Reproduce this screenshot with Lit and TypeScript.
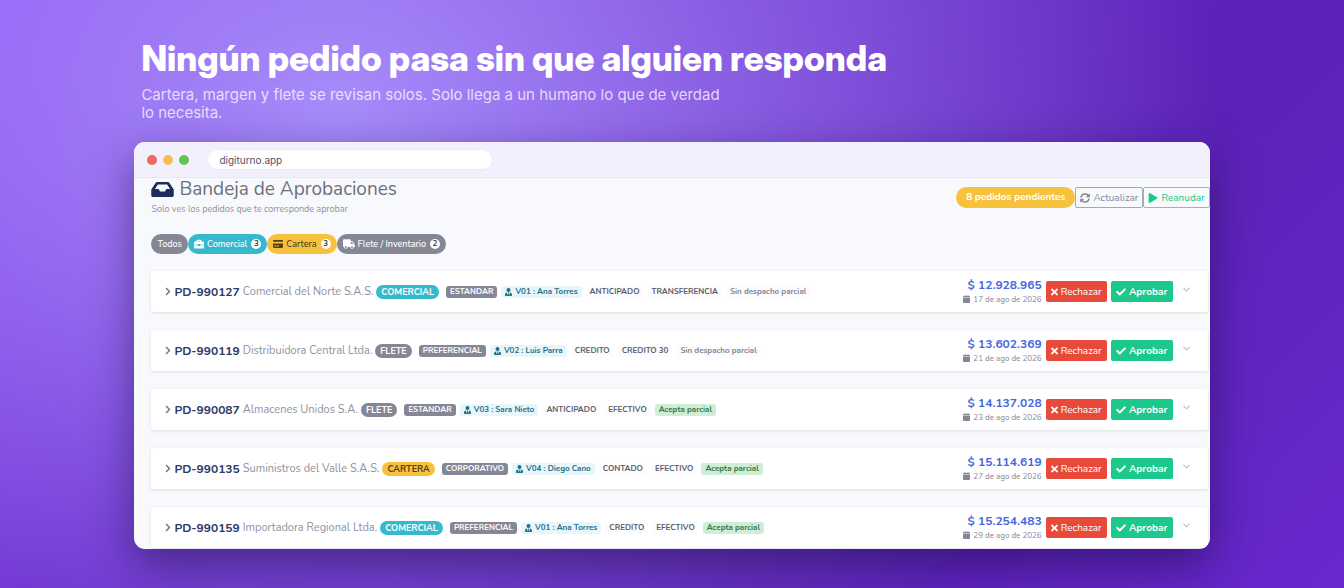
import { LitElement, html, css, svg, nothing } from "lit";
import { customElement, property, state } from "lit/decorators.js";
import { classMap } from "lit/directives/class-map.js";

type Area = "comercial" | "cartera" | "flete";

interface Order {
  id: string;
  client: string;
  area: Area;
  segment: string;
  seller: string;
  terms: string;
  method: string;
  partial: boolean;
  amount: string;
  date: string;
}

const ORDERS: Order[] = [
  { id: "PD-990127", client: "Comercial del Norte S.A.S.", area: "comercial", segment: "ESTANDAR", seller: "V01 : Ana Torres", terms: "ANTICIPADO", method: "TRANSFERENCIA", partial: false, amount: "$ 12.928.965", date: "17 de ago de 2026" },
  { id: "PD-990119", client: "Distribuidora Central Ltda.", area: "flete", segment: "PREFERENCIAL", seller: "V02 : Luis Parra", terms: "CREDITO", method: "CREDITO 30", partial: false, amount: "$ 13.602.369", date: "21 de ago de 2026" },
  { id: "PD-990087", client: "Almacenes Unidos S.A.", area: "flete", segment: "ESTANDAR", seller: "V03 : Sara Nieto", terms: "ANTICIPADO", method: "EFECTIVO", partial: true, amount: "$ 14.137.028", date: "23 de ago de 2026" },
  { id: "PD-990135", client: "Suministros del Valle S.A.S.", area: "cartera", segment: "CORPORATIVO", seller: "V04 : Diego Cano", terms: "CONTADO", method: "EFECTIVO", partial: true, amount: "$ 15.114.619", date: "27 de ago de 2026" },
  { id: "PD-990159", client: "Importadora Regional Ltda.", area: "comercial", segment: "PREFERENCIAL", seller: "V01 : Ana Torres", terms: "CREDITO", method: "EFECTIVO", partial: true, amount: "$ 15.254.483", date: "29 de ago de 2026" },
];

const TABS: { area: Area; label: string; icon: string; count: number }[] = [
  { area: "comercial", label: "Comercial", icon: "briefcase", count: 3 },
  { area: "cartera", label: "Cartera", icon: "card", count: 3 },
  { area: "flete", label: "Flete / Inventario", icon: "truck", count: 2 },
];

const ICONS: Record<string, { box: string; body: unknown }> = {
  inbox: {
    box: "0 32 576 384",
    body: svg`<path fill-rule="evenodd" d="M567.900 211.400 462.300 53.100A48 48 0 0 0 422.400 32H153.600a48 48 0 0 0-39.900 21.100L8.100 211.400A48 48 0 0 0 0 238v130a48 48 0 0 0 48 48h480a48 48 0 0 0 48-48V238a48 48 0 0 0-8.100-26.600ZM170.700 96h234.600L480 208h-96l-32 64H224l-32-64H96Z"/>`,
  },
  briefcase: {
    box: "0 0 512 512",
    body: svg`<path fill-rule="evenodd" d="M48 128h80V80a48 48 0 0 1 48-48h160a48 48 0 0 1 48 48v48h80a48 48 0 0 1 48 48v112H320v-16a16 16 0 0 0-16-16h-96a16 16 0 0 0-16 16v16H0V176a48 48 0 0 1 48-48Zm144 0h128V96H192Z"/><path d="M0 320h192v16a16 16 0 0 0 16 16h96a16 16 0 0 0 16-16v-16h192v112a48 48 0 0 1-48 48H48a48 48 0 0 1-48-48Z"/>`,
  },
  card: {
    box: "0 0 576 512",
    body: svg`<path d="M48 32h480a48 48 0 0 1 48 48v48H0V80a48 48 0 0 1 48-48Z"/><path fill-rule="evenodd" d="M0 224h576v208a48 48 0 0 1-48 48H48a48 48 0 0 1-48-48Zm64 124v40a12 12 0 0 0 12 12h72a12 12 0 0 0 12-12v-40a12 12 0 0 0-12-12H76a12 12 0 0 0-12 12Zm128 0v40a12 12 0 0 0 12 12h136a12 12 0 0 0 12-12v-40a12 12 0 0 0-12-12H204a12 12 0 0 0-12 12Z"/>`,
  },
  truck: {
    box: "0 0 640 512",
    body: svg`<path fill-rule="evenodd" d="M48 0h320a48 48 0 0 1 48 48v48h44a48 48 0 0 1 34 14l100 100a48 48 0 0 1 14 34v108h16a16 16 0 0 1 16 16v32a16 16 0 0 1-16 16h-48a96 96 0 0 1-192 0H256a96 96 0 0 1-192 0H48a48 48 0 0 1-48-48V48A48 48 0 0 1 48 0Zm368 144v112h144v-12L460 144ZM160 368a48 48 0 1 0 0 96 48 48 0 0 0 0-96Zm320 0a48 48 0 1 0 0 96 48 48 0 0 0 0-96Z"/>`,
  },
  sync: {
    box: "0 0 512 512",
    body: svg`<path d="M370.700 133.300A166 166 0 0 0 93 218c-2 6-6 9-11 9H24c-8 0-13-7-12-14A248 248 0 0 1 256 8c66 0 127 26 171 69l36-36c15-15 41-4 41 17v134a24 24 0 0 1-24 24H346c-21 0-32-26-17-41ZM32 296h134c21 0 32 26 17 41l-42 42a166 166 0 0 0 278-85c2-6 6-9 11-9h58c8 0 13 7 12 14A248 248 0 0 1 256 504c-66 0-127-26-171-69l-36 36c-15 15-41 4-41-17V320a24 24 0 0 1 24-24Z"/>`,
  },
  play: {
    box: "0 0 448 512",
    body: svg`<path d="M424.400 214.700 72.400 6.600C43.800-10.300 0 6.100 0 47.900V464c0 37.500 40.700 60.100 72.400 41.300l352-208c31.400-18.500 31.500-64.100 0-82.600Z"/>`,
  },
  user: {
    box: "0 0 448 512",
    body: svg`<path d="M224 256a128 128 0 1 0 0-256 128 128 0 0 0 0 256Zm96 33-48 191-32-136 32-56h-96l32 56-32 136-48-191C57 292 0 350 0 422v42a48 48 0 0 0 48 48h352a48 48 0 0 0 48-48v-42c0-72-57-130-128-133Z"/>`,
  },
  calendar: {
    box: "0 0 448 512",
    body: svg`<path d="M0 192h448v272a48 48 0 0 1-48 48H48a48 48 0 0 1-48-48Zm0-32v-48a48 48 0 0 1 48-48h48V12A12 12 0 0 1 108 0h40a12 12 0 0 1 12 12v52h128V12a12 12 0 0 1 12-12h40a12 12 0 0 1 12 12v52h48a48 48 0 0 1 48 48v48Z"/>`,
  },
  times: {
    box: "0 0 352 352",
    body: svg`<path d="m243 176 100-100c12-12 12-32 0-44L321 9c-12-12-32-12-44 0L176 109 76 9C64-3 44-3 32 9L9 32c-12 12-12 32 0 44l100 100L9 276c-12 12-12 32 0 44l22 23c12 12 32 12 44 0l101-100 100 100c12 12 32 12 44 0l23-22c12-12 12-32 0-44Z"/>`,
  },
  check: {
    box: "0 0 512 400",
    body: svg`<path d="M174 383 7 217c-10-10-10-26 0-36l37-37c10-10 26-10 36 0l112 112L432 16c10-10 26-10 36 0l37 37c10 10 10 26 0 36L210 383c-10 10-26 10-36 0Z"/>`,
  },
  right: {
    box: "0 0 320 512",
    body: svg`<path d="M285 273 91 467c-9 9-24 9-34 0l-22-22c-9-9-9-24 0-34l154-155L35 101c-9-9-9-24 0-34l22-22c10-9 25-9 34 0l194 194c10 10 10 25 0 34Z"/>`,
  },
  down: {
    box: "0 0 448 320",
    body: svg`<path d="M207 285 13 91c-9-9-9-24 0-34l22-22c9-9 24-9 34 0l155 154L379 35c10-9 25-9 34 0l22 22c9 10 9 25 0 34L241 285c-10 10-25 10-34 0Z"/>`,
  },
};

const icon = (name: string, kind = "") =>
  html`<svg class="icon ${kind}" viewBox=${ICONS[name].box} aria-hidden="true">${ICONS[name].body}</svg>`;

const shared = css`
  * {
    box-sizing: border-box;
  }
  button {
    font: inherit;
    color: inherit;
    border: 0;
    background: none;
    padding: 0;
    cursor: pointer;
    white-space: nowrap;
  }
  .icon {
    display: block;
    flex: none;
    width: 10px;
    height: 10px;
    fill: currentColor;
  }
`;

@customElement("order-row")
export class OrderRow extends LitElement {
  @property({ attribute: false }) order!: Order;

  static styles = [
    shared,
    css`
      :host {
        display: block;
      }
      .row {
        display: flex;
        align-items: center;
        height: 41px;
        padding: 0 18px 0 14px;
        background: #fff;
        border-radius: 2px;
        box-shadow: 0 1px 3px rgba(58, 59, 69, 0.14);
        white-space: nowrap;
      }
      .main {
        display: flex;
        align-items: center;
        flex: 1;
        min-width: 0;
        gap: 3px;
      }
      .icon.chev {
        width: 6px;
        height: 9px;
        color: #6e707e;
      }
      .id {
        font-size: 12px;
        font-weight: 700;
        color: #2c3a66;
      }
      .client {
        font-size: 11px;
        color: #8f919f;
      }
      .tags {
        display: flex;
        align-items: center;
        gap: 4px;
        font-size: 8px;
        line-height: 12px;
        font-weight: 700;
      }
      .area {
        padding: 0 5px;
        margin-right: 3px;
        border-radius: 7px;
        font-size: 9px;
        line-height: 14px;
        color: #fff;
      }
      .comercial {
        background: #36b9cc;
      }
      .flete {
        background: #858796;
      }
      .cartera {
        background: #f6c23e;
        color: #4f4018;
      }
      .tag {
        display: flex;
        align-items: center;
        gap: 3px;
        padding: 0 4px;
        border-radius: 3px;
        background: #fcfcfe;
        color: #5a5c69;
      }
      .segment {
        background: #858796;
        color: #fff;
      }
      .seller {
        background: #e8f6fa;
        color: #1f6f8b;
      }
      .tag .icon {
        width: 7px;
        height: 8px;
      }
      .none {
        color: #858796;
      }
      .partial {
        background: #d0edd6;
        color: #39764c;
      }
      .sum {
        display: flex;
        flex-direction: column;
        align-items: flex-end;
        margin-right: 4px;
      }
      .amount {
        font-size: 12px;
        line-height: 15px;
        font-weight: 700;
        color: #4468dc;
      }
      .date {
        display: flex;
        align-items: center;
        gap: 3px;
        font-size: 8px;
        line-height: 13px;
        color: #858796;
      }
      .date .icon {
        width: 7px;
        height: 8px;
      }
      .act {
        display: flex;
        align-items: center;
        justify-content: center;
        gap: 3px;
        width: 61px;
        height: 21px;
        border-radius: 2px;
        color: #fff;
        font-size: 10px;
      }
      .reject {
        background: #e74a3b;
      }
      .approve {
        width: 62px;
        margin-left: 4px;
        background: #1cc88a;
        font-weight: 700;
      }
      .act .icon {
        width: 7px;
        height: 8px;
      }
      .act.approve .icon {
        width: 10px;
      }
      .more {
        margin: 0 0 4px 10px;
        color: #c4c6d2;
      }
      .more .icon {
        width: 7px;
        height: 5px;
      }
    `,
  ];

  render() {
    const o = this.order;
    return html`
      <article class="row">
        <div class="main">
          ${icon("right", "chev")}
          <span class="id">${o.id}</span>
          <span class="client">${o.client}</span>
          <div class="tags">
            <span class="area ${o.area}">${o.area.toUpperCase()}</span>
            <span class="tag segment">${o.segment}</span>
            <span class="tag seller">${icon("user")}${o.seller}</span>
            <span class="tag">${o.terms}</span>
            <span class="tag">${o.method}</span>
            <span class=${classMap({ tag: true, partial: o.partial, none: !o.partial })}>
              ${o.partial ? "Acepta parcial" : "Sin despacho parcial"}
            </span>
          </div>
        </div>
        <div class="sum">
          <span class="amount">${o.amount}</span>
          <span class="date">${icon("calendar")}${o.date}</span>
        </div>
        <button class="act reject">${icon("times")}Rechazar</button>
        <button class="act approve">${icon("check")}Aprobar</button>
        <button class="more" aria-label="Ver detalle de ${o.id}">${icon("down")}</button>
      </article>
    `;
  }
}

@customElement("app-root")
export class AppRoot extends LitElement {
  @state() private filter: Area | null = null;

  static styles = [
    shared,
    css`
      :host {
        display: block;
        min-height: 100vh;
        padding: 38px 10% 39px;
        box-sizing: border-box;
        overflow: hidden;
        background:
          radial-gradient(66% 110% at 25% 18%, rgba(167, 139, 250, 1), rgba(167, 139, 250, 0) 100%),
          linear-gradient(135deg, #8b45f6 0%, #6829cb 32%, #5b21b6 68%, #6426c6 90%, #6927d0 100%);
        font-family: Nunito, Lato, sans-serif;
      }
      .hero {
        padding: 0 7px;
        font-family: Inter, sans-serif;
        color: #fff;
      }
      .hero h1 {
        margin: 0;
        font-family: "Inter Display", Inter, sans-serif;
        font-size: 35px;
        line-height: 40px;
        font-weight: 800;
      }
      .hero p {
        max-width: 590px;
        margin: 8px 0 0;
        font-size: 15px;
        line-height: 18px;
        color: rgba(255, 255, 255, 0.75);
      }
      .window {
        margin-top: 20px;
        border-radius: 11px;
        overflow: hidden;
        background: #f8f9fc;
        box-shadow: 0 16px 44px rgba(20, 8, 60, 0.5);
      }
      .chrome {
        display: flex;
        align-items: center;
        gap: 6px;
        height: 36px;
        padding: 0 13px;
        background: #f3f0fe;
        border-bottom: 1px solid #e9e5f7;
      }
      .dot {
        width: 10px;
        height: 10px;
        border-radius: 50%;
      }
      .close {
        background: #ee6a5f;
      }
      .min {
        background: #f5bd4f;
      }
      .max {
        background: #61c454;
      }
      .url {
        width: 286px;
        height: 21px;
        margin-left: 12px;
        padding: 0 11px;
        border: 1px solid #ece8fa;
        border-radius: 11px;
        outline: 0;
        background: #fff;
        font: 10px Inter, sans-serif;
        color: #55506e;
      }
      .content {
        padding: 0 0 1px 17px;
      }
      .top {
        display: flex;
        justify-content: space-between;
        align-items: flex-start;
      }
      .title {
        display: flex;
        align-items: center;
        gap: 5px;
        margin: 0;
        font-size: 19px;
        line-height: 23px;
        font-weight: 400;
        color: #6e707e;
      }
      .title .icon {
        width: 23px;
        height: 15px;
        color: #1f2d5c;
      }
      .sub {
        margin: 2px 0 0;
        font-size: 9px;
        line-height: 13px;
        color: #8f919f;
      }
      .tools {
        display: flex;
        align-items: center;
        margin-top: 9px;
        font-size: 10px;
      }
      .pending {
        height: 21px;
        padding: 0 10px;
        border-radius: 11px;
        background: #f6c23e;
        color: #fff;
        line-height: 21px;
        font-weight: 700;
      }
      .tool {
        display: flex;
        align-items: center;
        gap: 3px;
        height: 21px;
        padding: 0 4px;
        border: 1px solid #a5a7b4;
        border-radius: 2px;
        color: #858796;
      }
      .tool.resume {
        border-color: #5fd6aa;
        color: #1cc88a;
      }
      .tabs {
        display: flex;
        margin: 18px 0 17px;
      }
      .tab {
        display: flex;
        align-items: center;
        gap: 3px;
        height: 20px;
        padding: 0 6px;
        border-radius: 10px;
        background: #858796;
        color: #fff;
        font-size: 9px;
        font-weight: 500;
      }
      .tab.comercial {
        background: #36b9cc;
      }
      .tab.cartera {
        background: #f6c23e;
        color: #4f4018;
      }
      .tab.flete .icon {
        width: 12px;
      }
      .count {
        width: 10px;
        height: 10px;
        margin-left: 1px;
        border-radius: 5px;
        background: #fff;
        color: #3a3b45;
        font-size: 8px;
        line-height: 10px;
        font-weight: 700;
        text-align: center;
      }
      .list {
        display: flex;
        flex-direction: column;
        gap: 18px;
        padding-right: 2px;
      }
    `,
  ];

  render() {
    const shown = ORDERS.filter((o) => !this.filter || o.area === this.filter);
    return html`
      <header class="hero">
        <h1>Ningún pedido pasa sin que alguien responda</h1>
        <p>Cartera, margen y flete se revisan solos. Solo llega a un humano lo que de verdad lo necesita.</p>
      </header>
      <main class="window">
        <div class="chrome">
          <span class="dot close"></span>
          <span class="dot min"></span>
          <span class="dot max"></span>
          <input class="url" aria-label="Dirección" value="digiturno.app" readonly />
        </div>
        <div class="content">
          <div class="top">
            <div>
              <h2 class="title">${icon("inbox")}Bandeja de Aprobaciones</h2>
              <p class="sub">Solo ves los pedidos que te corresponde aprobar</p>
            </div>
            <div class="tools">
              <span class="pending">8 pedidos pendientes</span>
              <button class="tool">${icon("sync")}Actualizar</button>
              <button class="tool resume">${icon("play")}Reanudar</button>
            </div>
          </div>
          <nav class="tabs">
            <button class="tab" @click=${() => (this.filter = null)}>Todos</button>
            ${TABS.map(
              (t) => html`<button class="tab ${t.area}" @click=${() => (this.filter = t.area)}>
                ${icon(t.icon)}${t.label}<span class="count">${t.count}</span>
              </button>`
            )}
          </nav>
          <section class="list">
            ${shown.length ? shown.map((o) => html`<order-row .order=${o}></order-row>`) : nothing}
          </section>
        </div>
      </main>
    `;
  }
}
